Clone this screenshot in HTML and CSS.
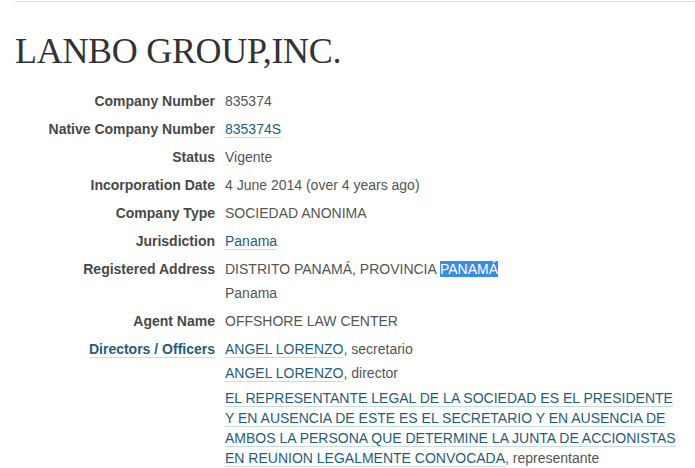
FILE: index.html
```html
<!DOCTYPE html>
<html>
<head>
    <title>LANBO GROUP,INC.</title>
    <link rel="stylesheet" href="styles.css">
</head>
<body>
    <div class="topline"></div>
    <div class="container">
        <h1>LANBO GROUP,INC.</h1>

        <dl class="attributes">
            <dt>Company Number</dt>
            <dd>835374</dd>

            <dt>Native Company Number</dt>
            <dd><a href="#">835374S</a></dd>

            <dt>Status</dt>
            <dd>Vigente</dd>

            <dt>Incorporation Date</dt>
            <dd>4 June 2014 (over 4 years ago)</dd>

            <dt>Company Type</dt>
            <dd>SOCIEDAD ANONIMA</dd>

            <dt>Jurisdiction</dt>
            <dd><a href="#">Panama</a></dd>

            <dt>Registered Address</dt>
            <dd>
                <ul>
                    <li>DISTRITO PANAMÁ, PROVINCIA <span class="selected">PANAMÁ</span></li>
                    <li>Panama</li>
                </ul>
            </dd>

            <dt>Agent Name</dt>
            <dd>OFFSHORE LAW CENTER</dd>

            <dt><a href="#">Directors / Officers</a></dt>
            <dd>
                <ul>
                    <li><a href="#">ANGEL LORENZO</a>, secretario</li>
                    <li><a href="#">ANGEL LORENZO</a>, director</li>
                    <li class="long"><a href="#">EL REPRESENTANTE LEGAL DE LA SOCIEDAD ES EL PRESIDENTE Y EN AUSENCIA DE ESTE ES EL SECRETARIO Y EN AUSENCIA DE AMBOS LA PERSONA QUE DETERMINE LA JUNTA DE ACCIONISTAS EN REUNION LEGALMENTE CONVOCADA</a>, representante</li>
                </ul>
            </dd>
        </dl>
    </div>
</body>
</html>
```

FILE: styles.css
```css
body {
    font-family: "Liberation Sans", Arial, sans-serif;
    font-size: 14px;
    line-height: 20px;
    color: #555;
    background: white;
    margin: 0;
}
.topline {
    margin-left: 15px;
    margin-top: 1px;
    height: 1px;
    background: #dcdcdc;
}
.container {
    padding: 0 15px;
}
h1 {
    font-family: "Liberation Serif", "Times New Roman", serif;
    font-weight: normal;
    font-size: 36px;
    line-height: 40px;
    letter-spacing: -0.3px;
    color: #333;
    margin: 29px 0 20px 0;
}
a {
    color: #1f5d7c;
    text-decoration: none;
    border-bottom: 1px solid #c8dce3;
}
.attributes {
    display: grid;
    grid-template-columns: 200px 1fr;
    column-gap: 10px;
    row-gap: 8px;
    margin: 0;
}
.attributes dt {
    text-align: right;
    font-weight: bold;
    color: #484848;
}
.attributes dd {
    margin: 0;
}
.attributes ul {
    list-style: none;
    margin: 0;
    padding: 0;
}
.attributes li {
    margin-bottom: 4px;
}
.attributes li:last-child {
    margin-bottom: 0;
}
.attributes li.long {
    padding-top: 1px;
}
.selected {
    background: #3b8ce8;
    color: white;
}
```
